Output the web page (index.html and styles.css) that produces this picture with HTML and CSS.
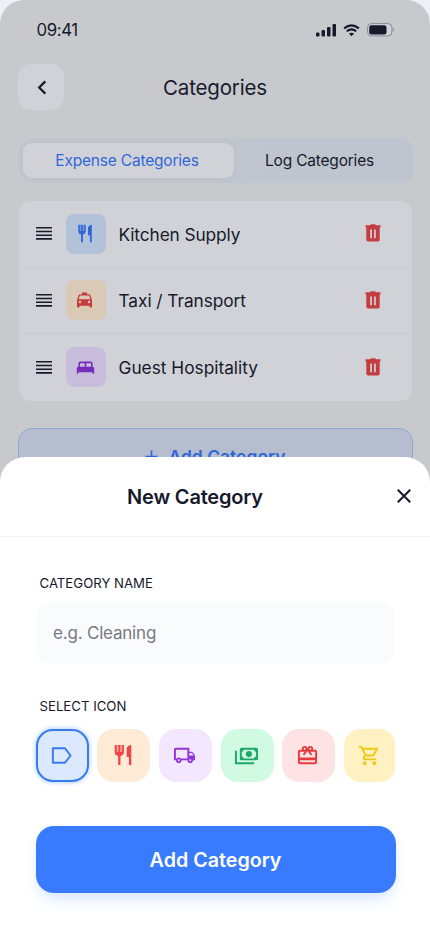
FILE: index.html
```html
<!DOCTYPE html>
<html lang="en">
<head>
<meta charset="utf-8">
<meta name="viewport" content="width=device-width, initial-scale=1">
<title>Categories</title>
<link rel="stylesheet" href="styles.css">
</head>
<body>
<svg class="defs" width="0" height="0" aria-hidden="true">
  <symbol id="fork" viewBox="0 0 24 24" preserveAspectRatio="none"><path d="M11 9H9V2H7v7H5V2H3v7c0 2.12 1.66 3.84 3.75 3.97V22h2.5v-9.03C11.34 12.84 13 11.12 13 9V2h-2v7zm5-3v8h2.5v8H21V2c-2.76 0-5 2.24-5 4z"/><path d="M4 2h8v7q-4 3-8 0z" opacity=".45"/></symbol>
  <symbol id="drag" viewBox="0 0 16 13"><path d="M0 0h16v1.6H0zM0 3.7h16v1.6H0zM0 7.4h16V9H0zM0 11.1h16v1.6H0z"/></symbol>
  <symbol id="trash" viewBox="0 0 16 18"><path fill-rule="evenodd" d="M.5 1.200H5L6 .3h4l1 .9h4.500v2.200H.5zM1.300 3.400h13.400v12.300q0 1.800-1.800 1.800H3.100q-1.800 0-1.800-1.800zM5.200 5.500v8.700h1.700V5.500zM9.100 5.500v8.700h1.700V5.500z"/></symbol>
</svg>
<div class="phone">
  <header class="status">
    <span class="clock">09:41</span>
    <div class="signals">
      <svg class="cell" viewBox="0 0 20 13"><rect y="8.5" width="3.5" height="4" rx="1"/><rect x="5.5" y="6" width="3.5" height="6.5" rx="1"/><rect x="11" y="3" width="3.5" height="9.5" rx="1"/><rect x="16.5" y="0" width="3.5" height="12.5" rx="1"/></svg>
      <svg class="wifi" viewBox="0 0 18 13"><path d="M1.2 4.3Q9-2.3 16.8 4.3M4 7.3q5-4.2 10 0" fill="none" stroke="currentColor" stroke-width="2.3"/><path d="M6.2 9.8q2.8-2 5.6 0L9 12.6z"/></svg>
      <svg class="battery" viewBox="0 0 28 14"><rect x=".6" y=".6" width="24.3" height="12.3" rx="3.8" fill="#d0d2d8" stroke="#85899a"/><path d="M26 4.8q2 2 0 4z" fill="#85899a"/><rect x="2.2" y="2.2" width="17.3" height="9.2" rx="2.2"/></svg>
    </div>
  </header>
  <nav class="topbar">
    <button class="back" aria-label="Back"><svg viewBox="0 0 10 16"><path d="M8.5 1.500 2 8l6.500 6.500" fill="none" stroke="currentColor" stroke-width="2.400"/></svg></button>
    <h1 class="title">Categories</h1>
  </nav>
  <div class="tabs">
    <span class="tab tab-on">Expense Categories</span>
    <span class="tab tab-off">Log Categories</span>
  </div>
  <ul class="list">
    <li class="row"><svg class="drag"><use href="#drag"/></svg><span class="tile blue"><svg class="small-fork"><use href="#fork"/></svg></span><span class="name n1">Kitchen Supply</span><svg class="trash"><use href="#trash"/></svg></li>
    <li class="row"><svg class="drag"><use href="#drag"/></svg><span class="tile orange"><svg class="taxi" viewBox="0 0 24 24"><path d="M18.920 6.010C18.720 5.420 18.160 5 17.500 5H15V3H9v2H6.500c-.66 0-1.210.42-1.420 1.010L3 12v8c0 .55.45 1 1 1h1c.55 0 1-.45 1-1v-1h12v1c0 .55.45 1 1 1h1c.55 0 1-.45 1-1v-8l-2.080-5.990zM6.500 16c-.83 0-1.500-.67-1.500-1.500S5.670 13 6.500 13s1.500.67 1.500 1.500S7.330 16 6.500 16zm11 0c-.83 0-1.500-.67-1.500-1.500s.67-1.500 1.500-1.500 1.500.67 1.500 1.500-.67 1.500-1.500 1.500zM5 11l1.500-4.500h11L19 11H5z"/></svg></span><span class="name n2">Taxi / Transport</span><svg class="trash"><use href="#trash"/></svg></li>
    <li class="row"><svg class="drag"><use href="#drag"/></svg><span class="tile purple"><svg class="bed" viewBox="0 0 24 24"><path fill-rule="evenodd" d="M1 20v-7q0-2 2-2V7q0-2.500 2.500-2.500h13Q21 4.500 21 7v4q2 0 2 2v7h-2v-2H3v2zM5 11h6V6.500H6q-1 0-1 1zm8 0h6V7.500q0-1-1-1h-5z"/></svg></span><span class="name n3">Guest Hospitality</span><svg class="trash"><use href="#trash"/></svg></li>
  </ul>
  <div class="add"><svg viewBox="0 0 14 14"><path d="M7 .5v13M.5 7h13" stroke="currentColor" stroke-width="1.800"/></svg><span>Add Category</span></div>

  <section class="sheet">
    <header class="sheet-head">
      <h2 class="sheet-title">New Category</h2>
      <svg class="close" viewBox="0 0 14 14"><path d="m.8.8 12.400 12.400M13.200.8.8 13.200" stroke="currentColor" stroke-width="2"/></svg>
    </header>
    <div class="form">
      <label class="label l1" for="cat">CATEGORY NAME</label>
      <input class="field" id="cat" placeholder="e.g. Cleaning">
      <div class="label l2">SELECT ICON</div>
      <div class="choices">
        <span class="choice c1"><svg viewBox="0 0 24 24"><path d="M3 4.500h12.700L21.500 12l-5.800 7.500H3z" fill="none" stroke="currentColor" stroke-width="2" stroke-linejoin="round"/></svg></span>
        <span class="choice c2"><svg><use href="#fork"/></svg></span>
        <span class="choice c3"><svg viewBox="0 0 24 24"><path d="M20 8h-3V4H3c-1.100 0-2 .9-2 2v11h2c0 1.660 1.340 3 3 3s3-1.340 3-3h6c0 1.660 1.340 3 3 3s3-1.340 3-3h2v-5l-3-4zm-.5 1.500l1.960 2.500H17V9.500h2.500zM6 18c-.55 0-1-.45-1-1s.45-1 1-1 1 .45 1 1-.45 1-1 1zm2.220-3c-.55-.61-1.330-1-2.220-1s-1.670.39-2.220 1H3V6h12v9H8.220zM18 18c-.55 0-1-.45-1-1s.45-1 1-1 1 .45 1 1-.45 1-1 1z"/></svg></span>
        <span class="choice c4"><svg viewBox="0 0 24 24"><path d="M1 7v13h19" fill="none" stroke="currentColor" stroke-width="2"/><path fill-rule="evenodd" d="M7 4h15q2 0 2 2v9q0 2-2 2H7q-2 0-2-2V6q0-2 2-2zm2 2q0 2-2 2v5q2 0 2 2h11q0-2 2-2V8q-2 0-2-2z"/><circle cx="14.500" cy="10.500" r="3.200"/></svg></span>
        <span class="choice c5"><svg viewBox="0 0 24 24"><path d="M20 6h-2.180c.11-.31.18-.65.18-1 0-1.660-1.340-3-3-3-1.050 0-1.960.54-2.500 1.350l-.5.67-.5-.68C10.960 2.540 10.050 2 9 2 7.340 2 6 3.340 6 5c0 .35.07.69.18 1H4c-1.110 0-1.990.89-1.990 2L2 19c0 1.110.89 2 2 2h16c1.110 0 2-.89 2-2V8c0-1.110-.89-2-2-2zm-5-2c.55 0 1 .45 1 1s-.45 1-1 1-1-.45-1-1 .45-1 1-1zM9 4c.55 0 1 .45 1 1s-.45 1-1 1-1-.45-1-1 .45-1 1-1zm11 15H4v-2h16v2zm0-5H4V8h5.080L7 10.830 8.620 12 11 8.760l1-1.360 1 1.360L15.380 12 17 10.830 14.920 8H20v6z"/></svg></span>
        <span class="choice c6"><svg viewBox="0 0 24 24"><path d="M15.550 13c.75 0 1.410-.41 1.750-1.030l3.580-6.490c.37-.66-.11-1.480-.87-1.480H5.210l-.94-2H1v2h2l3.600 7.590-1.350 2.440C4.520 15.370 5.480 17 7 17h12v-2H7l1.100-2h7.450zM6.160 6h12.150l-2.760 5H8.530L6.160 6zM7 18c-1.100 0-1.990.9-1.990 2S5.900 22 7 22s2-.9 2-2-.9-2-2-2zm10 0c-1.100 0-1.990.9-1.990 2s.89 2 1.990 2 2-.9 2-2-.9-2-2-2z"/></svg></span>
      </div>
      <button class="submit">Add Category</button>
    </div>
  </section>
</div>
</body>
</html>
```
FILE: styles.css
```css
* { box-sizing: border-box; }
body { margin: 0; background: #edf0f6; font-family: Inter, "Liberation Sans", sans-serif; color: #161a2b; }
svg { fill: currentColor; display: block; flex: none; }
.defs { position: absolute; }
button { border: 0; padding: 0; font: inherit; color: inherit; }
h1, h2, ul { margin: 0; padding: 0; list-style: none; }
.phone { position: relative; width: 430px; height: 930px; overflow: hidden; border-radius: 24px 24px 0 0; background: #c7c9cd; white-space: nowrap; }
.status { display: flex; justify-content: space-between; height: 60px; padding: 0 35px 0 36.5px; align-items: center; }
.clock { font-size: 16.8px; letter-spacing: -.4px; }
.signals { display: flex; align-items: center; gap: 7px; }
.cell { width: 20px; height: 13px; }
.wifi { width: 17px; height: 13px; }
.battery { width: 28px; height: 14px; }
.topbar { display: grid; grid-template-columns: 46px 1fr 46px; align-items: center; height: 46px; margin: 4px 18px 0; }
.back { display: grid; place-items: center; width: 46px; height: 46px; border-radius: 13px; background: #d0d2d7; }
.back svg { width: 10px; height: 15px; margin-left: 1px; }
.title { text-align: center; font-size: 20.5px; font-weight: 400; letter-spacing: -.15px; }
.tabs { display: grid; grid-template-columns: 211px 1fr; height: 45px; margin: 28px 17px 0 19px; padding: 5px 4px; border-radius: 12px; background: linear-gradient(90deg, #c3c6cc, #bfc5cf 70%); }
.tab { display: grid; place-items: center; height: 35px; border-radius: 9px; font-size: 15.500px; font-weight: 400; letter-spacing: -.2px; padding-bottom: 1px; }
.tab-on { background: #d0d2d7; color: #3067d7; box-shadow: 0 0 4px #b8bcc5; padding-right: 3px; }
.tab-off { padding-right: 4px; }
.list { margin: 18px 18px 0 19px; height: 200px; border-radius: 12px; background: #d0d2d7; overflow: hidden; }
.row { display: flex; align-items: center; height: 66.5px; padding: 0 31px 0 17px; border-bottom: 1px solid #c7cacf; }
.row:last-child { border-bottom: 0; }
.drag { width: 16px; height: 13px; }
.tile { display: grid; place-items: center; width: 39.5px; height: 40px; margin-left: 14px; border-radius: 8px; }
.small-fork { width: 18px; height: 21px; margin-right: 2px; }
.taxi { width: 21px; height: 20px; margin-right: 2px; }
.bed { width: 19px; height: 19px; margin-right: 1px; }
.blue { background: #b2c2d8; color: #2e65d8; }
.orange { background: #dac9b5; color: #c63a3d; }
.purple { background: #c9bddc; color: #762cbd; }
.name { margin: 1px 0 0 13px; font-size: 17.3px; font-weight: 400; }
.n1 { letter-spacing: -.1px; }
.n2 { letter-spacing: -.05px; }
.n3 { letter-spacing: 0; }
.trash { width: 16px; height: 18px; margin: -1px 0 0 auto; color: #c43c40; }
.add { display: flex; justify-content: center; align-items: center; gap: 10px; height: 56px; margin: 27px 17px 0 18px; border: 1px solid #91a7d8; border-radius: 14px; background: #b5bdce; color: #3067d7; font-size: 17.500px; font-weight: 600; }
.add svg { width: 13px; height: 13px; }
.sheet { position: absolute; left: 0; right: 0; top: 457px; bottom: 0; border-radius: 25px 25px 0 0; background: #fff; }
.sheet-head { display: grid; grid-template-columns: 1fr 35px; align-items: center; height: 80px; border-bottom: 1px solid #f2f2f4; }
.sheet-title { padding-right: 5px; text-align: center; font-size: 20px; font-weight: 600; letter-spacing: -.2px; }
.close { width: 14px; height: 14px; margin: -2px 0 0 2px; }
.form { padding: 36px 35px 0 36px; }
.label { display: block; margin-left: 3.5px; height: 20px; line-height: 20px; font-size: 13.200px; }
.field { display: block; width: 100%; height: 62px; margin-top: 9px; padding: 0 17px; border: 0; border-radius: 16px; background: #f9fbfd; font: 400 17px Inter, sans-serif; letter-spacing: -.2px; }
.field::placeholder { color: #777a80; opacity: 1; }
.l2 { margin-top: 32px; }
.choices { display: grid; grid-template-columns: repeat(6, 53px); column-gap: 8.7px; margin: 13px 0 0 -.5px; width: 360px; }
.choice { display: grid; place-items: center; height: 53px; border-radius: 17px; }
.choice svg { width: 23px; height: 23px; margin: -1px 2px 0 0; }
.choice.c2 svg { width: 22px; height: 24px; }
.choice.c6 svg { margin-right: 0; }
.c1 { background: #dbe8fd; color: #387bef; border: 2px solid #387bef; box-shadow: 0 0 4px 1px #b8d4ff; }
.c2 { background: #ffebd5; color: #ef4545; }
.c3 { background: #f2e7ff; color: #9135d9; }
.c4 { background: #d1fae3; color: #1ca869; }
.c5 { background: #fee3e4; color: #e43b3f; }
.c6 { background: #fff1c1; color: #edc913; width: 51px; border-radius: 17px 15px 15px 17px; }
.submit { display: block; width: 360px; height: 67px; margin: 44px 0 0 -.5px; border-radius: 18px; background: #387bff; color: #fff; font-size: 19.700px; font-weight: 600; box-shadow: 0 8px 16px -3px #d4e3ff; }
```
